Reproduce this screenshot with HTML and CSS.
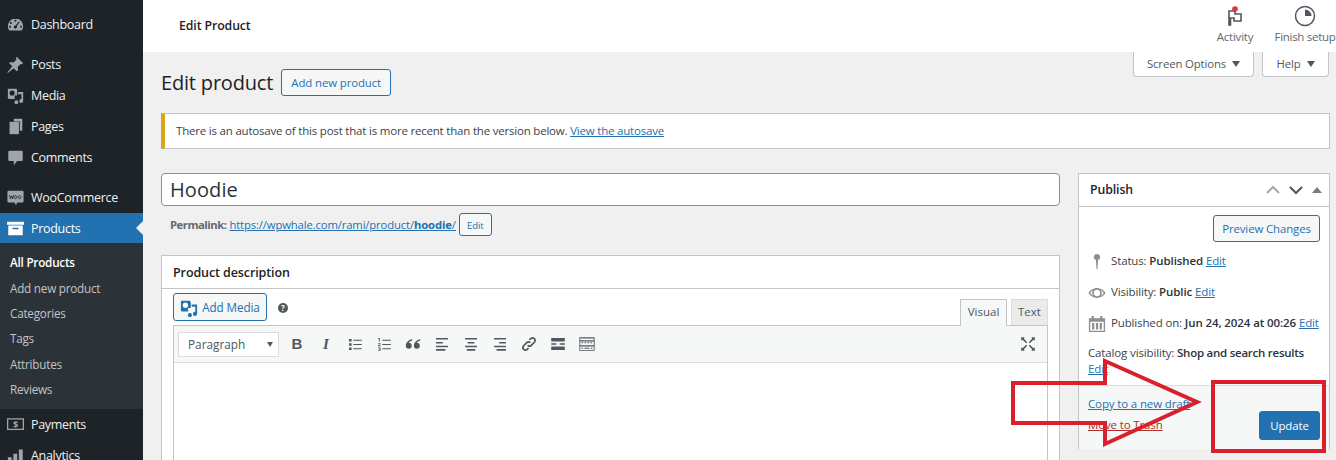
FILE: index.html
```html
<!DOCTYPE html>
<html lang="en">
<head>
<meta charset="utf-8">
<title>Edit product</title>
<link rel="stylesheet" href="styles.css">
</head>
<body>
<div class="app">
  <nav class="side">
    <a class="item first"><svg class="ic" viewBox="0 0 20 20"><path d="M10 3a9 9 0 0 0-9 9c0 2 .6 3.600 1.800 5h14.400c1.200-1.400 1.800-3 1.800-5a9 9 0 0 0-9-9zm0 1.500a1.200 1.200 0 1 1 0 2.400 1.200 1.200 0 0 1 0-2.400zM4.500 7a1.200 1.200 0 1 1 0 2.400 1.200 1.200 0 0 1 0-2.400zM3.500 11.500a1.200 1.200 0 1 1 0 2.400 1.200 1.200 0 0 1 0-2.400zm13 0a1.200 1.200 0 1 1 0 2.400 1.200 1.200 0 0 1 0-2.400zM14 6.500l1 .7-3.500 5a1.800 1.800 0 1 1-1.300-1z" fill-rule="evenodd"/></svg><span>Dashboard</span></a>
    <a class="item gap"><svg class="ic" viewBox="0 0 20 20"><path d="M11.500 1 19 8.500 17.500 9.800 16 9.300l-3.500 3.500.5 3.700-1.500 1.500-3.700-3.700L1 20l-.5-.5 5.700-7.300L2.500 8.500 4 7l3.700.5L11.200 4l-.7-1.700z"/></svg><span>Posts</span></a>
    <a class="item"><svg class="ic" viewBox="0 0 20 20"><path d="M1 2h10l1 1.500V10H9v4H2l-1-1zm5 2a3 3 0 1 0 0 6 3 3 0 0 0 0-6z" fill-rule="evenodd"/><path d="M13 6h6v10.500a2.300 2.300 0 1 1-2-2.300V8.500h-4zM11 15.500a2.300 2.300 0 1 1-2.300 2.300 2.300 2.300 0 0 1 2.300-2.300z"/></svg><span>Media</span></a>
    <a class="item"><svg class="ic" viewBox="0 0 20 20"><path d="M8 1h10v14h-3V4H8z"/><path d="M3 4.500h11V19H3z"/></svg><span>Pages</span></a>
    <a class="item"><svg class="ic" viewBox="0 0 20 20"><path d="M3 2h14a1.500 1.500 0 0 1 1.500 1.500v9A1.500 1.500 0 0 1 17 14h-5l-4 5v-5H3a1.500 1.500 0 0 1-1.500-1.500v-9A1.500 1.500 0 0 1 3 2z"/></svg><span>Comments</span></a>
    <a class="item woo"><svg class="ic" viewBox="0 0 20 20"><path d="M2 2h16a1.500 1.500 0 0 1 1.500 1.500v11A1.500 1.500 0 0 1 18 16h-6l-1.500 3L9 16H2a1.500 1.500 0 0 1-1.500-1.500v-11A1.500 1.500 0 0 1 2 2z"/><path class="woo-mark" d="M3 7l1 4.500 1.500-3 1 3 1-4.500M10 7.800a1.600 1.800 0 1 0 .01 0zM14.800 7.800a1.600 1.800 0 1 0 .01 0z"/></svg><span>WooCommerce</span></a>
    <a class="item current"><svg class="ic" viewBox="0 0 20 20"><path d="M0 2h20v3.500H0zM1.500 6.500h17V18h-17zM6.500 9v1.800h7V9z" fill-rule="evenodd"/></svg><span>Products</span></a>
    <div class="sub">
      <a class="on">All Products</a>
      <a>Add new product</a>
      <a>Categories</a>
      <a>Tags</a>
      <a>Attributes</a>
      <a>Reviews</a>
    </div>
    <a class="item"><svg class="ic" viewBox="0 0 20 20"><path d="M0 2.500h20v14H0zM1.500 4v11h17V4z" fill-rule="evenodd"/><text class="dollar" x="10" y="14" text-anchor="middle">$</text></svg><span>Payments</span></a>
    <a class="item"><svg class="ic" viewBox="0 0 20 20"><path d="M1 12h4.500v8H1zM7.500 8H12v12H7.500zM14 3h4.500v17H14z"/></svg><span>Analytics</span></a>
  </nav>

  <div class="main">
    <header class="top">
      <h2 class="crumb">Edit Product</h2>
      <div class="top-actions">
        <div class="act act-a">
          <svg width="20" height="24" viewBox="0 0 20 24"><path d="M4 7h6v3h6v7h-7v-3H5.500v7H4z" fill="none" stroke="#50575e" stroke-width="1.600"/><circle cx="10" cy="5" r="2.800" fill="#d63638"/></svg>
          <span>Activity</span>
        </div>
        <div class="act act-f">
          <svg width="24" height="24" viewBox="0 0 24 24"><circle cx="12" cy="12" r="9.500" fill="none" stroke="#50575e" stroke-width="1.500"/><path d="M12 5.500a6.500 6.500 0 0 1 6.500 6.500H12z" fill="#50575e"/></svg>
          <span>Finish setup</span>
        </div>
      </div>
    </header>

    <div class="body">
      <div class="screen-tabs">
        <div class="stab s1">Screen Options <i class="caret"></i></div>
        <div class="stab s2">Help <i class="caret"></i></div>
      </div>
      <div class="heading">
        <h1>Edit product</h1>
        <a class="btn add">Add new product</a>
      </div>
      <div class="notice">There is an autosave of this post that is more recent than the version below. <a>View the autosave</a></div>

      <div class="cols">
        <div class="col-l">
          <div class="title">Hoodie</div>
          <div class="perma"><b>Permalink:</b><a>https://wpwhale.com/rami/product/<strong>hoodie</strong>/</a><span class="btn mini">Edit</span></div>
          <section class="box">
            <h3 class="box-h">Product description</h3>
            <div class="box-in">
              <div class="ed-top">
                <a class="btn media"><svg width="18" height="18" viewBox="0 0 20 20" fill="#2271b1"><path d="M1 2h10l1 1.500V10H9v4H2l-1-1zm5 2a3 3 0 1 0 0 6 3 3 0 0 0 0-6z" fill-rule="evenodd"/><path d="M13 6h6v10.500a2.300 2.300 0 1 1-2-2.300V8.500h-4zM11 15.500a2.300 2.300 0 1 1-2.300 2.300 2.300 2.300 0 0 1 2.300-2.300z"/></svg>Add Media</a>
                <span class="qm">?</span>
                <div class="tabs"><span class="tab active">Visual</span><span class="tab">Text</span></div>
              </div>
              <div class="editor">
                <div class="bar">
                  <div class="sel">Paragraph<i class="caret dark"></i></div>
                  <div class="tools">
                    <span class="t tb">B</span>
                    <span class="t ti">I</span>
                    <svg class="t" viewBox="0 0 20 20"><path d="M3 4h3v3H3zM8 5h10v1.200H8zM3 9h3v3H3zM8 10h10v1.200H8zM3 14h3v3H3zM8 15h10v1.200H8z"/></svg>
                    <svg class="t" viewBox="0 0 20 20"><path d="M8 5h10v1.200H8zM8 10h10v1.200H8zM8 15h10v1.200H8zM3 3h2v4H4V4H3zM3 9h3v1L4 11.500h2v1H3v-1l2-1.500H3zM3 14h3v4H3v-1h2v-.5H4v-1h1V15H3z"/></svg>
                    <svg class="t" viewBox="0 0 20 20"><path d="M9 4C5 5 1.500 8.500 1.500 12a3.500 3.500 0 1 0 3.500-3.500c.5-1 2-2 4-2.500zM18.500 4c-4 1-7.500 4.500-7.500 8a3.500 3.500 0 1 0 3.500-3.500c.5-1 2-2 4-2.500z"/></svg>
                    <svg class="t" viewBox="0 0 20 20"><path d="M3 3h14v1.800H3zM3 7.500h8v1.800H3zM3 12h14v1.800H3zM3 16h11v1.800H3z"/></svg>
                    <svg class="t" viewBox="0 0 20 20"><path d="M3 3h14v1.800H3zM6 7.500h8v1.800H6zM3 12h14v1.800H3zM5 16h10v1.800H5z"/></svg>
                    <svg class="t" viewBox="0 0 20 20"><path d="M3 3h14v1.800H3zM9 7.500h8v1.800H9zM3 12h14v1.800H3zM6 16h11v1.800H6z"/></svg>
                    <svg class="t" viewBox="0 0 20 20"><path d="M8.500 11.500a3 3 0 0 0 4.200 0l3.800-3.800a3 3 0 0 0-4.200-4.200L10.500 5.300M11.500 8.500a3 3 0 0 0-4.200 0l-3.800 3.800a3 3 0 0 0 4.200 4.200l1.800-1.800" fill="none" stroke="#50575e" stroke-width="2"/></svg>
                    <svg class="t" viewBox="0 0 20 20"><path d="M2 3h16v4H2zM2 9h6v2H2zM12 9h6v2h-6zM2 13h16v4H2z"/></svg>
                    <svg class="t" viewBox="0 0 20 20"><path d="M1 2h18v16H1zM2 3.500v2h16v-2zM2 7v4.500h16V7zM2 13v4h16v-4zM3.500 8h2v1h-2zM7 8h2v1H7zM10.500 8h2v1h-2zM14 8h2v1h-2zM3.500 14.500h2v1h-2zM7 14.500h6v1H7zM14.500 14.500h2v1h-2z" fill-rule="evenodd"/></svg>
                  </div>
                  <svg class="t full" viewBox="0 0 20 20"><path d="M2 2h4L5 3.500 9 8l-1 1-4.500-4L2 6zM18 2v4l-1.500-1L12 9l-1-1 4-4.500L14 2zM2 18v-4l1.500 1L8 11l1 1-4 4.500L6 18zM18 18h-4l1-1.500L11 12l1-1 4.500 4 1.500-1z"/></svg>
                </div>
                <div class="area"></div>
              </div>
            </div>
          </section>
        </div>

        <aside class="col-r">
          <section class="pub">
            <div class="pub-h">
              <h3>Publish</h3>
              <div class="hctl">
                <svg width="16" height="10" viewBox="0 0 16 10"><path d="M2 8l6-6 6 6" fill="none" stroke="#a7aaad" stroke-width="2"/></svg>
                <svg width="16" height="10" viewBox="0 0 16 10"><path d="M2 2l6 6 6-6" fill="none" stroke="#50575e" stroke-width="2"/></svg>
                <svg width="12" height="8" viewBox="0 0 12 8"><path d="M6 1l5 6H1z" fill="#787c82"/></svg>
              </div>
            </div>
            <div class="pub-b">
              <div class="prev"><a class="btn">Preview Changes</a></div>
              <div class="mrow"><svg class="mi" viewBox="0 0 20 20"><path d="M10 1a3.500 3.500 0 0 1 1.200 6.800L10.500 18h-1L8.800 7.800A3.500 3.500 0 0 1 10 1z"/></svg><span>Status: <b>Published</b> <a>Edit</a></span></div>
              <div class="mrow"><svg class="mi" viewBox="0 0 20 20"><path d="M10 4.500c4 0 7.800 2.600 9.500 5.500-1.700 2.900-5.500 5.500-9.500 5.500S2.200 12.900.5 10C2.200 7.100 6 4.500 10 4.500zM6 6.700C4.600 7.400 3.400 8.500 2.500 10c.9 1.500 2.100 2.600 3.500 3.300a5 5 0 0 1 0-6.600zm8 0a5 5 0 0 1 0 6.600c1.400-.7 2.600-1.800 3.500-3.300-.9-1.500-2.100-2.600-3.500-3.300zM10 6.500a3.500 3.500 0 1 0 0 7 3.500 3.500 0 0 0 0-7z" fill-rule="evenodd"/></svg><span>Visibility: <b>Public</b> <a>Edit</a></span></div>
              <div class="mrow"><svg class="mi" viewBox="0 0 20 20"><path d="M4 1h2.500v2.500h7V1H16v2.500h3V19H1V3.500h3zM2.500 7.500v10h15v-10zM4.500 9H7v7H4.500zM8.800 9h2.500v7H8.800zM13 9h2.500v7H13z" fill-rule="evenodd"/></svg><span>Published on: <b>Jun 24, 2024 at 00:26</b> <a>Edit</a></span></div>
              <div class="cat">Catalog visibility: <b>Shop and search results</b><br><a>Edit</a></div>
            </div>
            <div class="pub-f">
              <div class="links"><a>Copy to a new draft</a><a class="del">Move to Trash</a></div>
              <a class="btn primary">Update</a>
            </div>
          </section>
        </aside>
      </div>
    </div>
  </div>
</div>
<svg class="marks" width="1336" height="460" viewBox="0 0 1336 460">
  <path d="M1013 383H1105V361L1197 402L1105 444V423H1013z" fill="none" stroke="#d9202b" stroke-width="4"/>
  <rect x="1213" y="382" width="111" height="69" fill="none" stroke="#d9202b" stroke-width="4"/>
</svg>
</body>
</html>
```

FILE: styles.css
```css
* { box-sizing: border-box; }
html, body { margin: 0; height: 460px; overflow: hidden; }
body { font: 12.5px/1.4 "Open Sans", "Noto Sans", sans-serif; color: #3c434a; background: #f0f0f1; position: relative; }
a { color: #2271b1; }
h1, h2, h3 { margin: 0; font-weight: 600; }
.app { display: flex; height: 460px; }

.side { width: 143px; flex: none; background: #1d2327; color: #f0f0f1; height: 460px; overflow: hidden; }
.item { display: flex; align-items: center; height: 31px; padding-left: 7px; gap: 7px; color: #f0f0f1; font-size: 12.5px; letter-spacing: -.3px; }
.item.first { margin-top: 9px; }
.item.gap { margin-top: 9px; }
.item.woo { margin-top: 9px; }
.item span { display: block; }
.ic { width: 17px; height: 17px; fill: #a0a5aa; flex: none; }
.woo-mark { fill: none; stroke: #1d2327; stroke-width: 1; }
.dollar { font-size: 11px; font-weight: 700; fill: #a0a5aa; }
.current { background: #2271b1; color: #fff; position: relative; height: 30px; padding-top: 1px; }
.current .ic { fill: #fff; }
.current::after { content: ""; position: absolute; right: 0; top: 8px; border: 7px solid transparent; border-right-color: #f0f0f1; border-left-width: 0; }
.sub { background: #2c3338; padding: 7.3px 0 6.700px; }
.sub a { display: block; height: 25.4px; line-height: 25.4px; padding-left: 10px; color: #c3c4c7; font-size: 11.700px; letter-spacing: -.22px; }
.sub a.on { color: #fff; font-weight: 600; }

.main { flex: 1; min-width: 0; }
.top { height: 52px; background: #fff; display: flex; align-items: center; justify-content: space-between; padding-left: 36px; overflow: hidden; }
.crumb { font-size: 12.3px; color: #1d2327; letter-spacing: -.1px; padding-bottom: 1px; }
.top-actions { display: flex; width: 122px; flex: none; overflow: hidden; height: 52px; }
.act { display: flex; flex-direction: column; align-items: center; flex: none; font-size: 11.500px; color: #646970; letter-spacing: -.2px; padding-top: 4px; line-height: 16px; white-space: nowrap; }
.act svg { margin-bottom: 1px; }
.act-a { width: 42px; }
.act-f { width: 62px; margin-left: 18px; letter-spacing: -.3px; }

.body { padding: 0 6px 0 18px; position: relative; }
.screen-tabs { position: absolute; top: 0; right: 7px; display: flex; gap: 8px; }
.stab { height: 25px; background: #fff; border: 1px solid #c3c4c7; border-top: 0; border-radius: 0 0 4px 4px; font-size: 11.300px; color: #50575e; display: flex; align-items: center; justify-content: center; gap: 6px; letter-spacing: -.1px; }
.s1 { width: 121px; }
.s2 { width: 67px; }
.caret { display: block; width: 0; height: 0; border: 4.500px solid transparent; border-top: 6px solid #50575e; border-bottom: 0; }
.heading { display: flex; align-items: center; gap: 8px; padding-top: 17px; height: 44px; }
.heading h1 { font-size: 20px; font-weight: 400; color: #1d2327; line-height: 27px; letter-spacing: -.18px; }
.btn { display: inline-flex; align-items: center; justify-content: center; border: 1px solid #2271b1; border-radius: 3px; color: #2271b1; background: #f6f7f7; font-size: 11.400px; letter-spacing: -.1px; white-space: nowrap; padding-top: 1px; }
.add { height: 27px; width: 110px; }
.notice { margin-top: 17px; height: 36px; background: #fff; border: 1px solid #c3c4c7; border-left: 4px solid #dba617; padding-left: 11px; display: flex; align-items: center; font-size: 11.500px; letter-spacing: -.2px; white-space: pre; }
.notice a { text-decoration: underline; }

.cols { display: grid; grid-template-columns: 899px 252px; gap: 18px; margin-top: 24px; }
.title { height: 33px; background: #fff; border: 1px solid #8c8f94; border-radius: 4px; padding-left: 8px; font-size: 20px; line-height: 31px; color: #2c3338; letter-spacing: .1px; }
.perma { height: 49px; padding: 7px 0 0 9px; display: flex; align-items: flex-start; gap: 3px; font-size: 11.300px; line-height: 23px; color: #646970; letter-spacing: -.14px; white-space: pre; }
.perma b { letter-spacing: -.5px; }
.perma a { text-decoration: underline; }
.mini { height: 23px; width: 33px; font-size: 9.500px; background: #f6f7f7; }
.box { background: #fff; border: 1px solid #c3c4c7; border-bottom: 0; height: 300px; }
.box-h { height: 33px; line-height: 33px; padding-left: 11px; font-size: 12.5px; color: #1d2327; border-bottom: 1px solid #c3c4c7; letter-spacing: -.1px; }
.box-in { padding: 4px 11px 0; }
.ed-top { display: flex; align-items: flex-start; height: 32px; }
.media { height: 28px; width: 94px; gap: 4px; font-size: 11.700px; }
.qm { width: 10px; height: 10px; margin: 10px 0 0 11px; border-radius: 50%; background: #50575e; color: #fff; font-size: 8px; font-weight: 700; line-height: 10px; text-align: center; }
.tabs { margin-left: auto; display: flex; gap: 4px; padding-top: 6px; position: relative; z-index: 1; }
.tab { height: 26px; width: 37px; border: 1px solid #dcdcde; border-bottom: 0; background: #ebebeb; font-size: 11.500px; line-height: 24px; text-align: center; color: #50575e; }
.tab.active { width: 47px; background: #f6f7f7; border-color: #c3c4c7; height: 27px; }
.editor { border: 1px solid #c3c4c7; height: 300px; }
.bar { height: 37px; display: flex; align-items: center; background: #f6f7f7; border-bottom: 1px solid #dcdcde; padding: 0 9px 0 4px; }
.sel { width: 101px; height: 25px; background: #fff; border: 1px solid #dcdcde; display: flex; align-items: center; justify-content: space-between; padding: 1px 5px 0 9px; font-size: 11.800px; color: #50575e; }
.caret.dark { border-width: 3.500px; border-top-width: 5px; border-bottom-width: 0; border-top-color: #50575e; }
.tools { display: flex; align-items: center; margin-left: 8px; gap: 9px; }
.t { display: block; width: 20px; height: 20px; fill: #50575e; flex: none; text-align: center; color: #50575e; line-height: 20px; }
svg.t { padding: 1.500px; }
.tb { font: 700 15px/20px "Liberation Sans", sans-serif; }
.ti { font: italic 700 15px/20px "Liberation Serif", serif; }
.full { margin-left: auto; }
.area { background: #fff; height: 240px; }

.pub { background: #fff; border: 1px solid #c3c4c7; height: 276px; }
.pub-h { height: 33px; display: flex; align-items: center; justify-content: space-between; padding: 0 6px 0 11px; border-bottom: 1px solid #c3c4c7; }
.pub-h h3 { font-size: 12.3px; color: #1d2327; letter-spacing: -.1px; }
.hctl { display: flex; align-items: center; gap: 7px; }
.pub-b { padding: 8px 9px 0; height: 178px; overflow: hidden; font-size: 11.500px; letter-spacing: -.14px; }
.prev { display: flex; justify-content: flex-end; height: 31px; }
.prev .btn { height: 27px; width: 107px; }
.mrow { display: flex; align-items: center; height: 31px; gap: 5px; white-space: pre; }
.mrow b, .cat b { font-weight: 600; color: #2c3338; letter-spacing: -.1px; }
.cat b { letter-spacing: -.25px; }
.mrow a, .cat a { text-decoration: underline; }
.mi { width: 18px; height: 18px; fill: #8c8f94; flex: none; }
.cat { margin-top: 6px; line-height: 16px; white-space: nowrap; }
.pub-f { height: 64px; background: #f6f7f7; border-top: 1px solid #dcdcde; display: flex; justify-content: space-between; padding: 8px 9px 0 9px; position: relative; }
.links { display: flex; flex-direction: column; gap: 5px; font-size: 11.500px; letter-spacing: -.14px; padding-top: 2px; line-height: 16px; }
.links a { text-decoration: underline; }
.links .del { color: #b32d2e; }
.primary { background: #2271b1; color: #fff; width: 61px; height: 29px; margin-top: 17px; }

.marks { position: absolute; left: 0; top: 0; pointer-events: none; }
```
